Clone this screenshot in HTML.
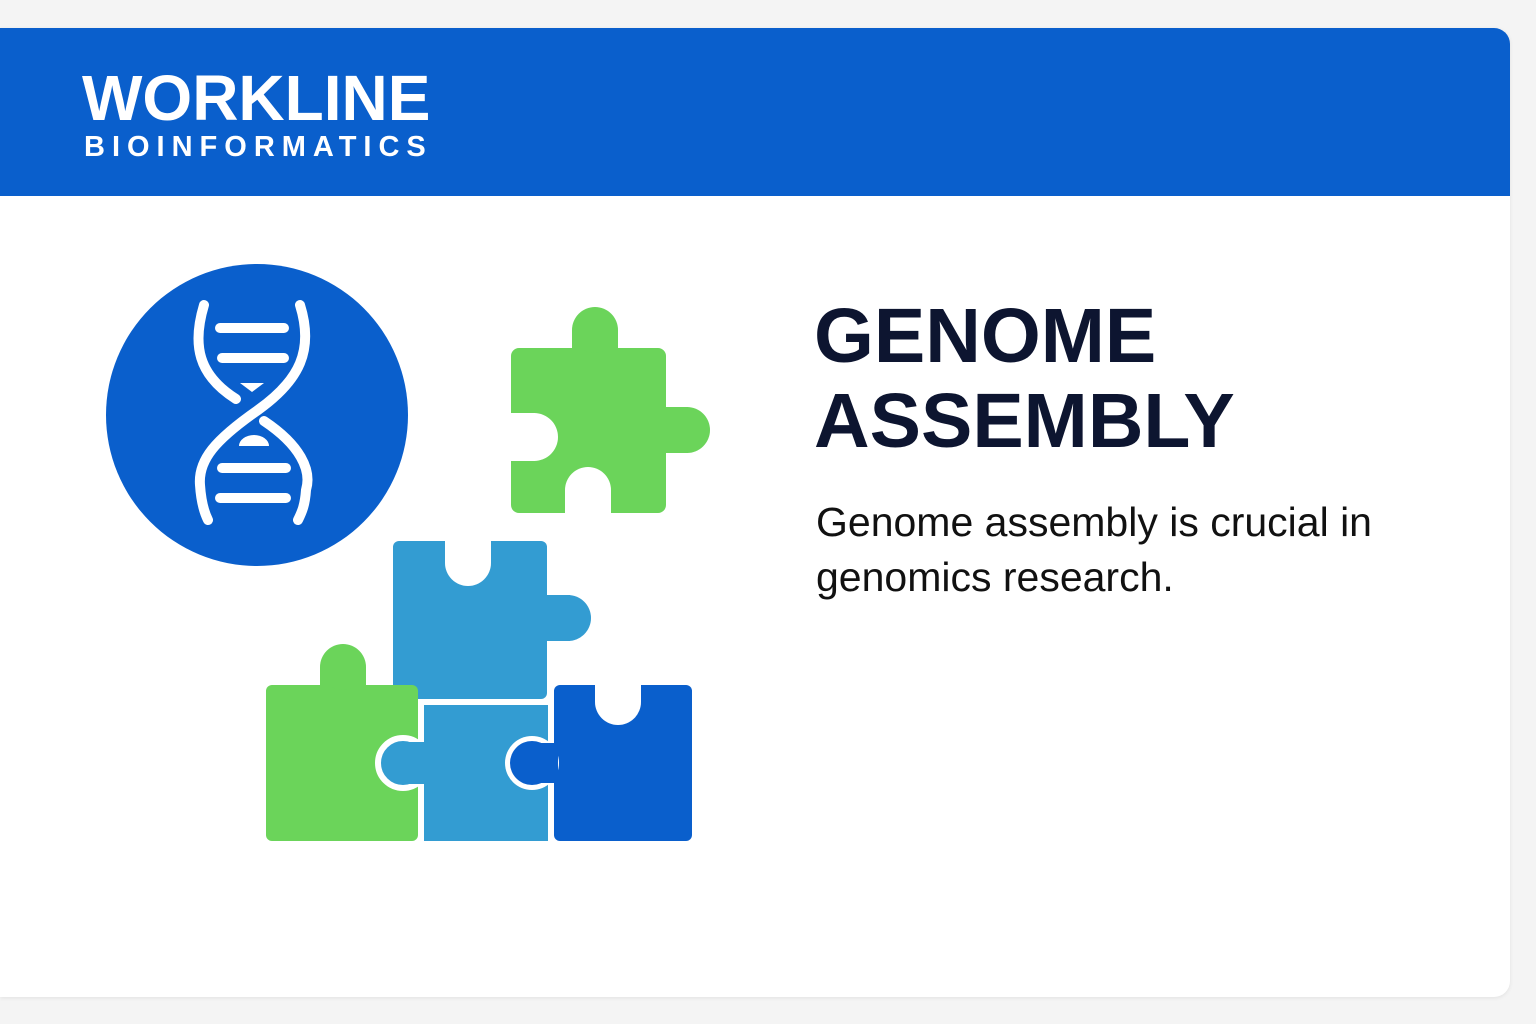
<!DOCTYPE html>
<html><head><style>
body{margin:0;width:1536px;height:1024px;background:#f4f4f4;position:relative;overflow:hidden;font-family:"Liberation Sans",sans-serif}
.card{position:absolute;left:0;top:28px;width:1510px;height:969px;background:#fff;border-radius:0 16px 16px 0;box-shadow:0 1px 4px rgba(0,0,0,.08);overflow:hidden}
.hdr{position:absolute;left:0;top:0;width:1510px;height:168px;background:#0a5fcc}
.t1{position:absolute;left:82px;top:38px;color:#fff;font-weight:bold;font-size:64px;letter-spacing:0px;line-height:1}
.t2{position:absolute;left:84px;top:105px;color:#fff;font-weight:bold;font-size:29px;letter-spacing:7px;line-height:1}
.h{position:absolute;left:814px;top:294px;color:#0d1530;font-weight:bold;font-size:77px;line-height:85px;letter-spacing:0px;margin:0}
.p{position:absolute;left:816px;top:495px;color:#111;font-size:41px;line-height:55px;width:640px}
svg{position:absolute;left:0;top:0}
</style></head><body>
<div class="card"><div class="hdr"><div class="t1">WORKLINE</div><div class="t2">BIOINFORMATICS</div></div></div>
<div class="h">GENOME<br>ASSEMBLY</div>
<div class="p">Genome assembly is crucial in genomics research.</div>
<svg width="1536" height="1024">
<circle cx="257" cy="415" r="151" fill="#0a5fcc"/>
<g stroke="#fff" stroke-width="10" stroke-linecap="round" fill="none">
<path d="M204 305 C192 345 198 375 236 399"/>
<path d="M300 305 C314 350 300 380 258 410 C215 440 198 460 200 485 C201 500 204 512 208 520"/>
<path d="M264 421 C300 445 312 470 306 490 C305 505 302 512 298 520"/>
<path d="M220 328H284M222 358H284M222 468H286M220 498H286"/>
</g>
<path d="M240 383h24l-12 9z M239 446a15 11 0 0 1 30 0z" fill="#fff"/>
<g fill="#6bd45a">
<rect x="511" y="348" width="155" height="165" rx="8"/>
<circle cx="595" cy="330" r="23"/><rect x="572" y="330" width="46" height="20"/>
<circle cx="687" cy="430" r="23"/><rect x="660" y="407" width="28" height="46"/>
</g>
<circle cx="534" cy="437" r="24" fill="#fff"/><rect x="505" y="413" width="30" height="48" fill="#fff"/>
<circle cx="588" cy="490" r="23" fill="#fff"/><rect x="565" y="490" width="46" height="30" fill="#fff"/>
<g fill="#339cd2">
<rect x="393" y="541" width="154" height="158" rx="6"/>
<circle cx="568" cy="618" r="23"/><rect x="540" y="595" width="30" height="46"/>
</g>
<circle cx="468" cy="563" r="23" fill="#fff"/><rect x="445" y="535" width="46" height="28" fill="#fff"/>
<g fill="#6bd45a">
<rect x="266" y="685" width="152" height="156" rx="6"/>
<circle cx="343" cy="667" r="23"/><rect x="320" y="667" width="46" height="20"/>
</g>
<circle cx="403" cy="763" r="25" fill="#339cd2" stroke="#fff" stroke-width="6"/>
<rect x="424" y="705" width="124" height="136" fill="#339cd2"/>
<rect x="400" y="742" width="30" height="42" fill="#339cd2"/>
<rect x="554" y="685" width="138" height="156" rx="6" fill="#0a5fcc"/>
<circle cx="532" cy="763" r="27" fill="#fff"/>
<circle cx="532" cy="763" r="22" fill="#0a5fcc"/>
<rect x="532" y="743" width="26" height="40" fill="#0a5fcc"/>
<circle cx="618" cy="702" r="23" fill="#fff"/><rect x="595" y="680" width="46" height="22" fill="#fff"/>
</svg>
</body></html>
